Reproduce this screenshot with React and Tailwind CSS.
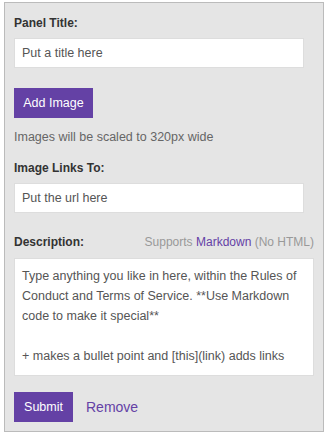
import React, { useState } from 'react';

const descriptionHint =
  'Type anything you like in here, within the Rules of\nConduct and Terms of Service. **Use Markdown\ncode to make it special**\n\n+ makes a bullet point and [this](link) adds links';

const PanelEditor = () => {
  const [title, setTitle] = useState('');
  const [link, setLink] = useState('');
  const [description, setDescription] = useState('');

  return (
    <div className="min-h-screen bg-white pl-[4px] pt-[2px] font-['Liberation_Sans',Arial,sans-serif] text-[12px]">
      <div className="w-[320px] border border-[#bbb] bg-[#e5e5e5] px-[9px] pt-[10px] pb-[9px]">
        <label className="block h-[20px] font-bold leading-[20px] text-[#333]">Panel Title:</label>
        <input
          type="text"
          value={title}
          onChange={(e) => setTitle(e.target.value)}
          placeholder="Put a title here"
          className="mt-[5px] block h-[30px] w-[290px] border border-[#ddd] bg-white px-[7px] text-[12.5px] text-[#555] outline-none placeholder:text-[#555]"
        />

        <button
          type="button"
          className="mt-[20px] block h-[30px] w-[79px] bg-[#6441a5] text-[12.5px] text-white"
        >
          Add Image
        </button>
        <p className="mt-[9px] h-[20px] text-[12.5px] leading-[20px] text-[#666]">Images will be scaled to 320px wide</p>

        <label className="mt-[11px] block h-[20px] font-bold leading-[20px] text-[#333]">Image Links To:</label>
        <input
          type="text"
          value={link}
          onChange={(e) => setLink(e.target.value)}
          placeholder="Put the url here"
          className="mt-[5px] block h-[30px] w-[290px] border border-[#ddd] bg-white px-[7px] text-[12.5px] text-[#555] outline-none placeholder:text-[#555]"
        />

        <div className="mt-[19px] flex h-[20px] items-center justify-between leading-[20px]">
          <label className="font-bold text-[#333]">Description:</label>
          <span className="text-[#999]">
            Supports <a href="#" className="text-[#6441a5]">Markdown</a> (No HTML)
          </span>
        </div>
        <textarea
          value={description}
          onChange={(e) => setDescription(e.target.value)}
          placeholder={descriptionHint}
          wrap="off"
          className="mt-[6px] block h-[118px] w-full resize-none overflow-hidden border border-[#ddd] bg-white pl-[7px] pr-0 pt-[7px] text-[12.5px] leading-[20px] text-[#555] outline-none placeholder:text-[#555]"
        />

        <div className="mt-[16px] flex items-center gap-[13px]">
          <button type="button" className="h-[30px] w-[59px] bg-[#6441a5] text-[12.5px] text-white">
            Submit
          </button>
          <a href="#" className="text-[14px] text-[#6441a5]">Remove</a>
        </div>
      </div>
    </div>
  );
};

export default PanelEditor;
